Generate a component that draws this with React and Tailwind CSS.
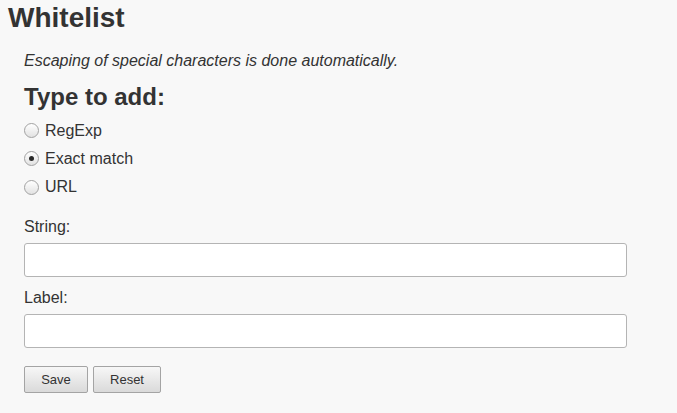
import React, { useState } from 'react';

const Radio = ({ checked, label, onChange }) => (
  <label className="flex items-center h-[28.25px] cursor-pointer" onClick={onChange}>
    <span className="w-[15px] h-[15px] rounded-full border border-[#a2a2a2] bg-gradient-to-b from-[#ffffff] to-[#e2e2e2] flex items-center justify-center mr-[6px]">
      {checked && <span className="w-[5px] h-[5px] rounded-full bg-[#2a2a2a]" />}
    </span>
    <span className="leading-[20px]">{label}</span>
  </label>
);

const Btn = ({ children, w }) => (
  <button className={`h-[27px] ${w} rounded-[2px] border border-[#a4a4a4] bg-gradient-to-b from-[#f7f7f7] to-[#dadada] text-[13px] text-[#333] leading-none`}>
    {children}
  </button>
);

export default function App() {
  const [type, setType] = useState('exact');

  return (
    <div className="min-h-[413px] w-[677px] bg-[#f8f8f8] text-[#333] font-['Liberation_Sans',Arial,sans-serif] text-[16px]">
      <h1 className="text-[28px] font-bold leading-[34px] pl-[8px] pt-[0.5px]">Whitelist</h1>
      <div className="pl-[24px]">
        <p className="italic leading-[20px] mt-[16px]">Escaping of special characters is done automatically.</p>
        <h2 className="text-[24px] font-bold leading-[28px] mt-[12px]">Type to add:</h2>
        <div className="flex flex-col mt-[6px]">
          <Radio label="RegExp" checked={type === 'regexp'} onChange={() => setType('regexp')} />
          <Radio label="Exact match" checked={type === 'exact'} onChange={() => setType('exact')} />
          <Radio label="URL" checked={type === 'url'} onChange={() => setType('url')} />
        </div>
        <div className="mt-[16px] leading-[20px]">String:</div>
        <input className="block mt-[6px] w-[603px] h-[34px] bg-white border border-[#b4b4b4] rounded-[3px] px-2 outline-none" />
        <div className="mt-[11px] leading-[20px]">Label:</div>
        <input className="block mt-[6px] w-[603px] h-[34px] bg-white border border-[#b4b4b4] rounded-[3px] px-2 outline-none" />
        <div className="flex gap-[5px] mt-[18px]">
          <Btn w="w-[64px]">Save</Btn>
          <Btn w="w-[68px]">Reset</Btn>
        </div>
      </div>
    </div>
  );
}
